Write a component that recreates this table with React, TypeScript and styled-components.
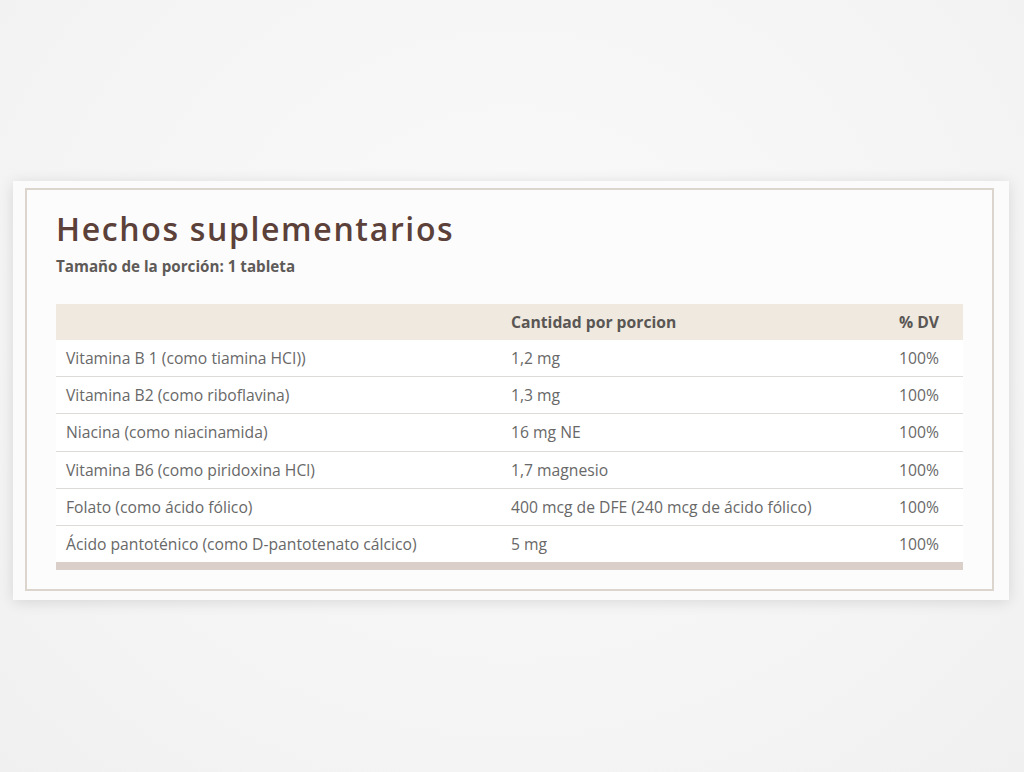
import React from "react";
import styled, { createGlobalStyle } from "styled-components";

const Global = createGlobalStyle`
  html, body { margin: 0; padding: 0; }
  body {
    background: #f5f5f5;
    font-family: "Open Sans", "Noto Sans", sans-serif;
    width: 1024px;
    height: 772px;
    overflow: hidden;
  }
`;

const Page = styled.div`
  width: 1024px;
  height: 772px;
  box-sizing: border-box;
  padding: 181px 15px 0 13px;
  background: radial-gradient(ellipse at 50% 40%, #fafafa 0%, #f4f4f4 70%, #f0f0f0 100%);
`;

const Card = styled.div`
  background: #fbfbfb;
  box-shadow: 0 2px 14px rgba(0, 0, 0, 0.12);
  padding: 7px 15px 9px 12px;
`;

const Frame = styled.div`
  border: 2px solid #dcd5ce;
  padding: 16px 29px 19px 29px;
  background: #fcfcfc;
`;

const Title = styled.h1`
  margin: 0;
  font-family: "Open Sans", "Lato", sans-serif;
  font-weight: 560;
  font-size: 32px;
  line-height: 46px;
  color: #5b4139;
  letter-spacing: 1.65px;
`;

const Serving = styled.div`
  margin-top: 3px;
  font-size: 15.2px;
  font-weight: 700;
  color: #5e5a58;
  line-height: 22px;
`;

const Table = styled.table`
  margin-top: 27px;
  width: 100%;
  border-collapse: collapse;
  font-size: 15.7px;
  color: #686868;
  border-bottom: 8px solid #dbd0c9;
`;

const HeadRow = styled.tr`
  background: #efe9df;
`;

const Th = styled.th<{ $align?: string; $w?: string }>`
  height: 36px;
  padding: 0 24px 0 10px;
  text-align: ${(p) => p.$align || "left"};
  width: ${(p) => p.$w || "auto"};
  font-weight: 700;
  color: #5a5654;
`;

const Row = styled.tr`
  border-top: 1px solid #dedad7;
  &:first-child { border-top: none; }
`;

const Td = styled.td<{ $align?: string }>`
  height: 36.2px;
  padding: 0 24px 0 10px;
  text-align: ${(p) => p.$align || "left"};
  background: #ffffff;
`;

const rows = [
  ["Vitamina B 1 (como tiamina HCI))", "1,2 mg", "100%"],
  ["Vitamina B2 (como riboflavina)", "1,3 mg", "100%"],
  ["Niacina (como niacinamida)", "16 mg NE", "100%"],
  ["Vitamina B6 (como piridoxina HCl)", "1,7 magnesio", "100%"],
  ["Folato (como ácido fólico)", "400 mcg de DFE (240 mcg de ácido fólico)", "100%"],
  ["Ácido pantoténico (como D-pantotenato cálcico)", "5 mg", "100%"],
];

export default function App() {
  return (
    <>
      <Global />
      <Page>
        <Card>
          <Frame>
            <Title>Hechos suplementarios</Title>
            <Serving>Tamaño de la porción: 1 tableta</Serving>
            <Table>
              <thead>
                <HeadRow>
                  <Th $w="411px"></Th>
                  <Th>Cantidad por porcion</Th>
                  <Th $align="right">% DV</Th>
                </HeadRow>
              </thead>
              <tbody>
                {rows.map((r) => (
                  <Row key={r[0]}>
                    <Td>{r[0]}</Td>
                    <Td>{r[1]}</Td>
                    <Td $align="right">{r[2]}</Td>
                  </Row>
                ))}
              </tbody>
            </Table>
          </Frame>
        </Card>
      </Page>
    </>
  );
}
